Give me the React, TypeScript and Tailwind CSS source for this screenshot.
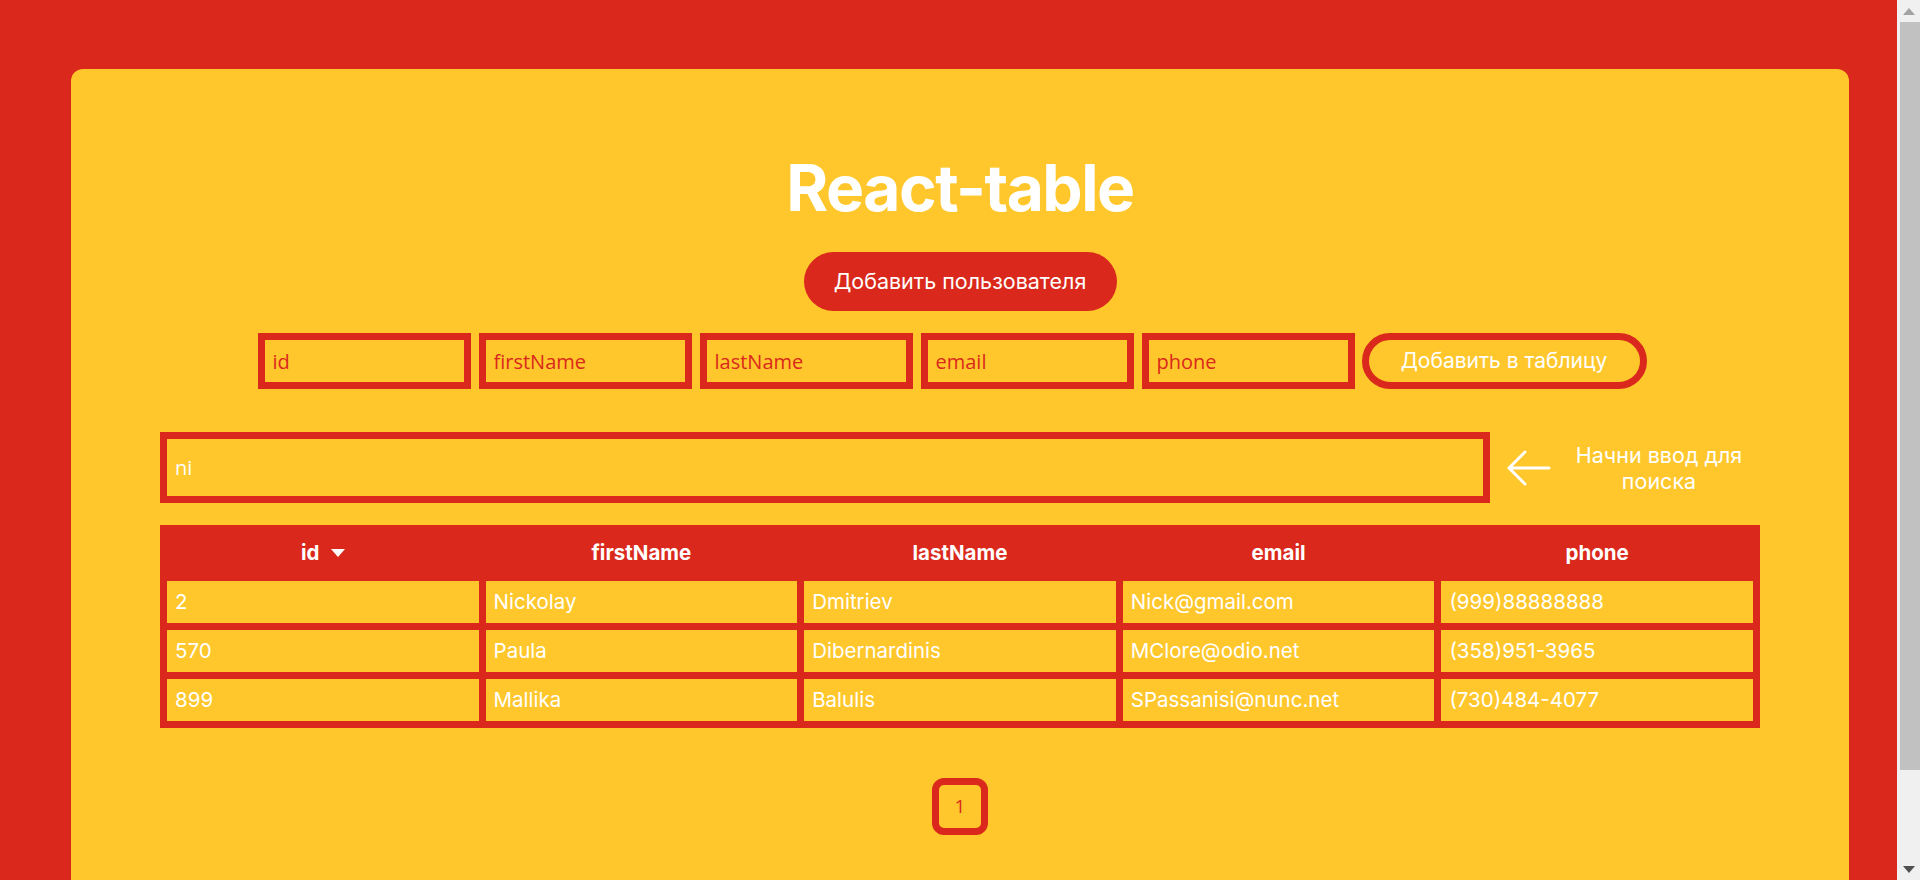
import React from "react";

const rows = [
  ["2", "Nickolay", "Dmitriev", "Nick@gmail.com", "(999)88888888"],
  ["570", "Paula", "Dibernardinis", "MClore@odio.net", "(358)951-3965"],
  ["899", "Mallika", "Balulis", "SPassanisi@nunc.net", "(730)484-4077"],
];

const headers = ["id", "firstName", "lastName", "email", "phone"];

function FakeScrollbar() {
  return (
    <div className="sticky top-0 self-start w-[23px] h-[880px] bg-[#f0f0f0] flex flex-col items-center shrink-0">
      <div className="h-[22px] w-full flex items-center justify-center">
        <svg width="12" height="7" viewBox="0 0 12 7">
          <path d="M6 0L12 7H0z" fill="#a3a3a3" />
        </svg>
      </div>
      <div className="ml-[2px] w-[20px] h-[748px] bg-[#c1c1c1]" />
      <div className="flex-1" />
      <div className="h-[22px] w-full flex items-center justify-center">
        <svg width="12" height="7" viewBox="0 0 12 7">
          <path d="M0 0H12L6 7z" fill="#505050" />
        </svg>
      </div>
    </div>
  );
}

export default function App() {
  return (
    <div className="flex bg-[#da291c] [font-family:Inter,'Noto_Sans',sans-serif]">
      <div className="flex-1 min-h-[994px] pt-[69px] pb-[69px] pl-[71px] pr-[48px]">
        <div className="bg-[#ffc72c] rounded-[12px] h-[856px] pt-[87px] flex flex-col items-center">
          <h1 className="text-[64px] leading-[64px] font-bold text-white tracking-[-1.5px]">React-table</h1>
          <button className="mt-[32px] h-[59px] w-[313px] rounded-full bg-[#da291c] text-white text-[21.5px]">
            Добавить пользователя
          </button>
          <div className="mt-[22px] flex gap-[8px] pr-[16px]">
            {headers.map((h) => (
              <input
                key={h}
                placeholder={h}
                className="w-[213px] h-[56px] border-[7px] border-[#da291c] bg-transparent px-[8px] text-[20px] text-white placeholder:text-[#da291c] outline-none [font-family:'Open_Sans',sans-serif]"
              />
            ))}
            <button className="ml-[-1px] w-[285px] h-[56px] rounded-full border-[7px] border-[#da291c] text-white text-[21px]">
              Добавить в таблицу
            </button>
          </div>
          <div className="w-[1600px] mt-[43px] flex items-center">
            <input
              defaultValue="ni"
              className="w-[1330px] h-[71px] border-[7px] border-[#da291c] bg-transparent px-[8px] text-[20px] text-white outline-none [font-family:'Open_Sans',sans-serif]"
            />
            <div className="w-[68px] flex justify-center pl-[8px]">
              <svg width="45" height="36" viewBox="0 0 45 36" fill="none" stroke="white" strokeWidth="3" strokeLinecap="round" strokeLinejoin="round">
                <path d="M43 18H3M19 2L3 18l16 16" />
              </svg>
            </div>
            <div className="w-[202px] text-center text-white text-[21.5px] leading-[26px]">
              Начни ввод для
              <br />
              поиска
            </div>
          </div>
          <table className="mt-[22px] w-[1600px] bg-[#da291c] border-separate border-spacing-[7px] table-fixed">
            <thead>
              <tr>
                {headers.map((h, i) => (
                  <th key={h} className="h-[42px] text-white font-bold text-[20.5px] text-center p-0">
                    {i === 0 ? (
                      <span className="inline-flex items-center gap-[11px]">
                        id
                        <svg width="14" height="8" viewBox="0 0 14 8">
                          <path d="M0 0h14L7 8z" fill="white" />
                        </svg>
                      </span>
                    ) : (
                      h
                    )}
                  </th>
                ))}
              </tr>
            </thead>
            <tbody>
              {rows.map((r) => (
                <tr key={r[0]}>
                  {r.map((c, j) => (
                    <td key={j} className="h-[42px] bg-[#ffc72c] text-white text-[20.5px] px-[8px] py-0 text-left">
                      {c}
                    </td>
                  ))}
                </tr>
              ))}
            </tbody>
          </table>
          <button className="mt-[50px] w-[56px] h-[57px] rounded-[12px] border-[7px] border-[#da291c] text-[#da291c] text-[19px] [font-family:'Open_Sans',sans-serif]">
            1
          </button>
        </div>
      </div>
      <FakeScrollbar />
    </div>
  );
}
